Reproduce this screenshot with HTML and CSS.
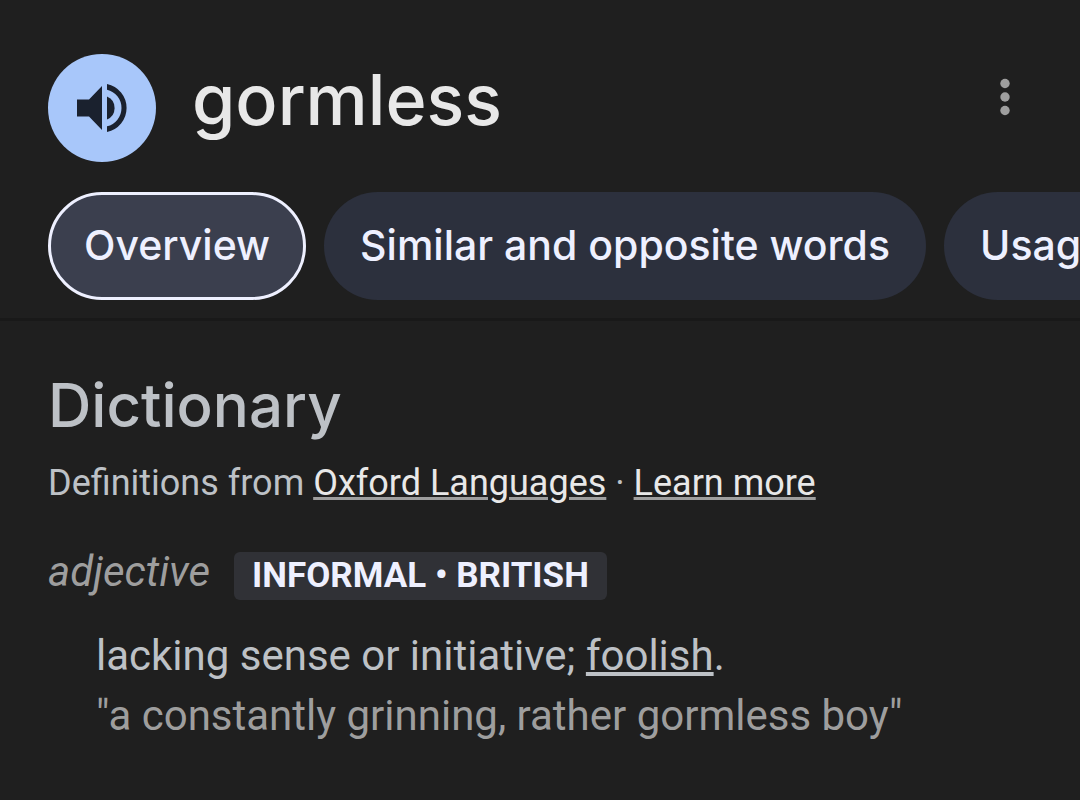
FILE: index.html
```html
<!DOCTYPE html>
<html lang="en">
<head>
<meta charset="utf-8">
<meta name="viewport" content="width=device-width, initial-scale=1">
<title>gormless</title>
<link rel="stylesheet" href="styles.css">
</head>
<body>
<header class="top">
  <div class="title-row">
    <button class="speak" type="button" aria-label="Listen">
      <svg class="speak-icon" viewBox="0 0 54 54" aria-hidden="true"><path d="M2 18.5v17h12L27 49V5L14 18.5z"/><path d="M32 15.5v23a12.5 12.5 0 0 0 0-23z"/><path d="M32 3v5.700a18.800 18.800 0 0 1 0 36.600V51a24.500 24.500 0 0 0 0-48z"/></svg>
    </button>
    <h1 class="word">gormless</h1>
    <button class="more" type="button" aria-label="More options">
      <svg class="more-icon" viewBox="0 0 12 38" aria-hidden="true"><circle cx="6" cy="5.500" r="4.700"/><circle cx="6" cy="19" r="4.700"/><circle cx="6" cy="32.500" r="4.700"/></svg>
    </button>
  </div>
  <nav class="chips">
    <button class="chip chip-active" type="button">Overview</button>
    <button class="chip" type="button">Similar and opposite words</button>
    <button class="chip" type="button">Usage</button>
  </nav>
</header>
<main class="content">
  <h2 class="heading">Dictionary</h2>
  <p class="source">Definitions from <a href="#oxford">Oxford Languages</a> · <a href="#learn">Learn more</a></p>
  <div class="kind"><i class="pos">adjective</i><span class="tag">INFORMAL • BRITISH</span></div>
  <div class="sense">
    <p class="definition">lacking sense or initiative; <a href="#foolish">foolish</a>.</p>
    <p class="example">"a constantly grinning, rather gormless boy"</p>
  </div>
</main>
</body>
</html>
```
FILE: styles.css
```css
* { box-sizing: border-box; }
body {
  margin: 0;
  background: #1f1f1f;
  color: #bdc1c6;
  font-family: Roboto, "Liberation Sans", sans-serif;
  overflow-x: hidden;
}
h1, h2, p { margin: 0; font-weight: 400; }
button { border: 0; padding: 0; font: inherit; cursor: pointer; }
.top { padding: 54px 0 18px 48px; border-bottom: 3px solid #191919; overflow: hidden; }
.title-row { display: flex; align-items: center; gap: 36px; padding-right: 60px; }
.speak {
  display: grid;
  place-items: center;
  width: 108px;
  height: 108px;
  border-radius: 50%;
  background: #a8c7fa;
}
.speak-icon { width: 54px; height: 54px; fill: #1a212e; }
.word {
  flex: 1;
  color: #e8e8e8;
  font: 500 70px/92px Inter, sans-serif;
  padding-bottom: 16px;
}
.more { width: 30px; height: 60px; background: none; padding-bottom: 24px; display: grid; place-items: center; }
.more-icon { width: 12px; height: 38px; fill: #9e9e9e; }
.chips { display: flex; gap: 18px; margin-top: 30px; }
.chip {
  flex: none;
  height: 108px;
  padding: 0 36px 2px;
  border-radius: 54px;
  background: #2c303d;
  color: #eef0ff;
  font: 500 41px/54px Inter, sans-serif;
  white-space: nowrap;
}
.chip-active { background: #3b3f4e; border: 3px solid #eef0ff; padding: 0 33px 2px; }
.content { padding: 45px 48px; }
.heading { font: 500 60px/78px Inter, sans-serif; }
.source { margin-top: 15px; font-size: 36px; line-height: 48px; }
.source a { color: #e8e8e8; text-decoration-color: #9e9e9e; text-decoration-thickness: 3px; text-underline-offset: 2px; }
.kind { display: flex; align-items: flex-end; gap: 24px; margin-top: 37px; }
.pos { font-size: 42px; line-height: 56px; color: #9e9e9e; }
.tag { padding: 0 18px; border-radius: 6px; background: #303136; color: #eef0ff; font-weight: 700; font-size: 35px; line-height: 48px; }
.sense { padding: 26px 48px; font-size: 42px; line-height: 60px; }
.definition a { color: inherit; text-decoration-thickness: 4px; text-underline-offset: 2px; }
.example { color: #9e9e9e; }
```
